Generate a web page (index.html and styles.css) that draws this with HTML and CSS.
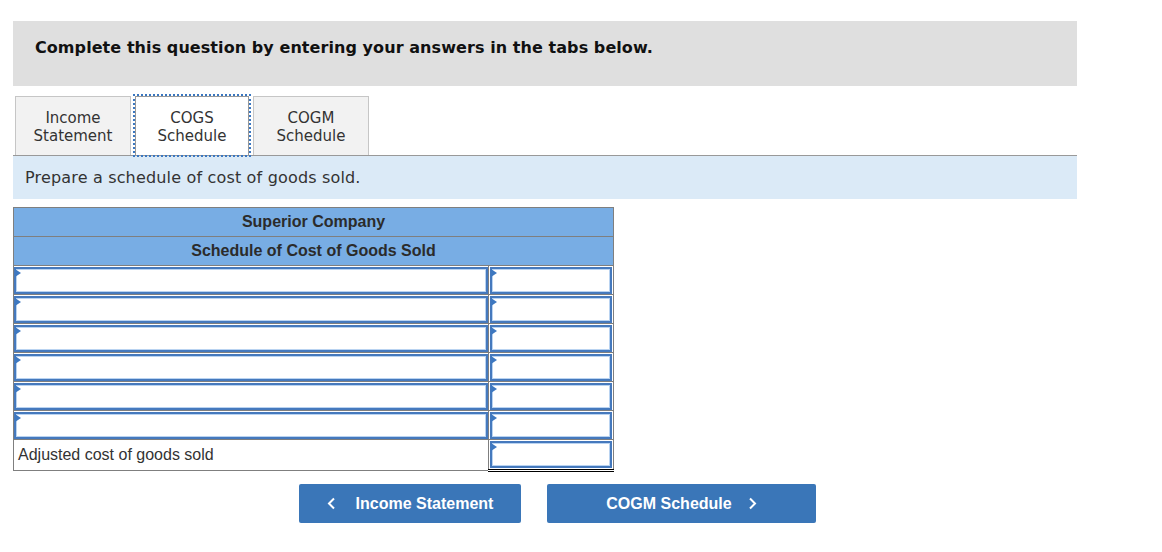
FILE: index.html
```html
<!DOCTYPE html>
<html>
<head>
<meta charset="utf-8">
<link rel="stylesheet" href="styles.css">
</head>
<body>
<div class="page">
  <div class="banner">Complete this question by entering your answers in the tabs below.</div>
  <div class="tabs">
    <div class="tab">Income<br>Statement</div>
    <div class="tab active">COGS<br>Schedule</div>
    <div class="tab">COGM<br>Schedule</div>
  </div>
  <div class="prompt">Prepare a schedule of cost of goods sold.</div>
  <table class="sched">
    <tr><th colspan="2">Superior Company</th></tr>
    <tr><th colspan="2">Schedule of Cost of Goods Sold</th></tr>
    <tr><td class="lbl"><div class="inp"></div></td><td class="amt"><div class="inp"></div></td></tr>
    <tr><td class="lbl"><div class="inp"></div></td><td class="amt"><div class="inp"></div></td></tr>
    <tr><td class="lbl"><div class="inp"></div></td><td class="amt line"><div class="inp"></div></td></tr>
    <tr><td class="lbl"><div class="inp"></div></td><td class="amt line"><div class="inp"></div></td></tr>
    <tr><td class="lbl"><div class="inp"></div></td><td class="amt line"><div class="inp"></div></td></tr>
    <tr><td class="lbl"><div class="inp"></div></td><td class="amt line"><div class="inp"></div></td></tr>
    <tr class="total"><td class="txt">Adjusted cost of goods sold</td><td class="amt line dbl"><div class="inp"></div></td></tr>
  </table>
  <div class="nav">
    <button class="btn prev"><svg class="chev" width="9" height="13" viewBox="0 0 9 13"><polyline points="7,1.5 2,6.5 7,11.5" fill="none" stroke="#fff" stroke-width="2"/></svg>Income Statement</button>
    <button class="btn next">COGM Schedule<svg class="chev" width="9" height="13" viewBox="0 0 9 13"><polyline points="2,1.5 7,6.5 2,11.5" fill="none" stroke="#fff" stroke-width="2"/></svg></button>
  </div>
</div>
</body>
</html>
```

FILE: styles.css
```css
html, body {
  margin: 0;
  padding: 0;
  background: #fff;
}
.page {
  padding: 21px 0 0 13px;
  width: 1064px;
  font-family: "DejaVu Sans", Verdana, sans-serif;
  color: #222;
}
.banner {
  background: #dfdfdf;
  height: 65px;
  box-sizing: border-box;
  padding: 17px 0 0 22px;
  font-weight: bold;
  font-size: 16px;
  letter-spacing: 0.07px;
  line-height: 20px;
  color: #111;
}
.tabs {
  display: flex;
  margin: 10px 0 0 2px;
  gap: 4px;
  align-items: flex-end;
}
.tab {
  width: 116px;
  height: 59px;
  box-sizing: border-box;
  padding-top: 2px;
  background: #f2f2f2;
  border: 1px solid #c6c6c6;
  border-bottom: none;
  display: flex;
  align-items: center;
  justify-content: center;
  text-align: center;
  font-size: 15px;
  line-height: 18px;
  color: #333;
}
.tab.active {
  width: 114px;
  background: #fff;
  border: 1px solid #999;
  border-bottom: none;
  outline: 2px dotted #3b77c0;
  outline-offset: 0;
}
.prompt {
  background: #dbeaf7;
  border-top: 1px solid #999;
  height: 44px;
  box-sizing: border-box;
  padding: 12px 0 0 12px;
  font-size: 16px;
  letter-spacing: 0.17px;
  line-height: 20px;
  color: #333;
}
.sched {
  margin-top: 8px;
  width: 601px;
  border-collapse: collapse;
  font-family: "Liberation Sans", Arial, sans-serif;
  border: 1px solid #7f7f7f;
}
.sched th {
  background: #78ade4;
  height: 28px;
  padding: 0;
  border-bottom: 1px solid #7f7f7f;
  font-size: 16px;
  font-weight: bold;
  color: #2b2b2b;
  text-align: center;
}
.sched td {
  height: 29px;
  padding: 0;
  box-sizing: border-box;
  border-bottom: 1px solid #7f7f7f;
  vertical-align: top;
}
.sched td.lbl {
  width: 474px;
  border-right: 1px solid #7f7f7f;
  padding: 1px 0 0 0;
}
.sched td.amt {
  width: 125px;
  padding: 1px 1px 0 1px;
}
.sched td.amt.line {
  border-top: 1px solid #000;
}
.sched td.amt.dbl {
  border-bottom: 3px double #000;
  padding-top: 1px;
  height: 31px;
}
.inp {
  position: relative;
  height: 27px;
  box-sizing: border-box;
  border: 2px solid #4579bd;
  box-shadow: inset 0 0 0 1px #b9d3f1;
  background: #fff;
}
.inp::before {
  content: "";
  position: absolute;
  left: -1px;
  top: 0;
  width: 0;
  height: 0;
  border-left: 6px solid #3e78c0;
  border-top: 4px solid transparent;
  border-bottom: 4px solid transparent;
}
.sched tr.total td.txt {
  border-right: 1px solid #7f7f7f;
  font-size: 16px;
  color: #333;
  padding: 6px 0 0 4px;
  height: 31px;
}
.nav {
  display: flex;
  gap: 26px;
  margin: 12px 0 0 286px;
}
.btn {
  height: 39px;
  border: none;
  border-radius: 2px;
  background: #3a76b8;
  color: #fff;
  font-family: "Liberation Sans", Arial, sans-serif;
  font-weight: bold;
  font-size: 16px;
  display: flex;
  align-items: center;
  justify-content: center;
  padding: 0;
}
.btn.prev { width: 222px; }
.btn.next { width: 269px; }
.chev {
  display: block;
}
.prev .chev { margin-right: 20px; }
.next .chev { margin-left: 16px; }
```
